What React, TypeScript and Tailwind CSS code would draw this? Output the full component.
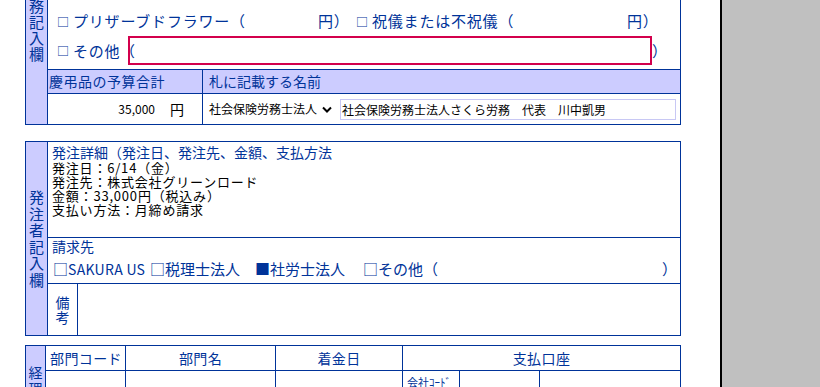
import React from "react";

function VText({ text, className }: { text: string; className: string }) {
  return (
    <div className={className}>
      {text.split("").map((c, i) => (
        <span key={i} className="block text-center">
          {c}
        </span>
      ))}
    </div>
  );
}

function Box({ filled }: { filled?: boolean }) {
  return <span className="inline-block w-[16px] shrink-0 text-[12px] leading-[15px]">{filled ? "■" : "□"}</span>;
}

function Table1() {
  return (
    <div className="flex w-[656px] border border-[#003399] text-[#003399]">
      <VText
        text="事務記入欄"
        className="flex w-[22px] shrink-0 flex-col items-center justify-center border-r border-[#003399] bg-[#ccccff] text-[15px] leading-[16px]"
      />
      <div className="flex flex-1 flex-col">
        <div className="h-[87px]" />
        <div className="flex h-[30px] items-center whitespace-nowrap pl-[9px] text-[15px] leading-[16px] tracking-[0.8px]">
          <span className="flex w-[261px] shrink-0 items-center">
            <Box />
            プリザーブドフラワー（
          </span>
          <span className="w-[38px] shrink-0">円）</span>
          <span className="flex w-[271px] shrink-0 items-center">
            <Box />
            祝儀または不祝儀（
          </span>
          <span>円）</span>
        </div>
        <div className="h-[33px] pl-[9px]">
          <div className="flex h-[29px] items-center whitespace-nowrap text-[15px] leading-[16px] tracking-[0.8px]">
            <span className="flex w-[63px] shrink-0 items-center">
              <Box />
              その他
            </span>
            <span className="w-[16px] shrink-0">（</span>
            <div className="-ml-[8px] h-[29px] w-[524px] shrink-0 border-2 border-[#d3004c]" />
            <span>）</span>
          </div>
        </div>
        <div className="flex h-[25px] border-y border-[#003399] bg-[#ccccff] text-[14px] leading-[23px]">
          <div className="w-[155px] border-r border-[#003399] pl-[1px] tracking-[0.5px]">慶弔品の予算合計</div>
          <div className="flex-1 pl-[6px]">札に記載する名前</div>
        </div>
        <div className="flex h-[30px] text-black">
          <div className="flex w-[155px] items-center justify-end gap-[15px] border-r border-[#003399] pr-[18px] text-[12px]">
            <span>35,000</span>
            <span className="text-[14px]">円</span>
          </div>
          <div className="flex flex-1 items-center whitespace-nowrap pl-[6px] text-[12px]">
            <div className="flex w-[131px] shrink-0 items-center">
              <span>社会保険労務士法人</span>
              <svg className="ml-[5px]" width="10" height="7" viewBox="0 0 10 7">
                <path d="M1 1.5 L5 5.5 L9 1.5" stroke="#000" strokeWidth="2" fill="none" />
              </svg>
            </div>
            <div className="flex h-[21px] w-[336px] shrink-0 items-center border border-[#c8c8f4] pl-[1px] leading-[19px]">
              社会保険労務士法人さくら労務　代表　川中凱男
            </div>
          </div>
        </div>
      </div>
    </div>
  );
}

function Table2() {
  return (
    <div className="mt-[16px] flex w-[656px] border border-[#003399] text-[#003399]">
      <VText
        text="発注者記入欄"
        className="flex w-[22px] shrink-0 flex-col items-center justify-center border-r border-[#003399] bg-[#ccccff] text-[15px] leading-[16.5px]"
      />
      <div className="flex flex-1 flex-col">
        <div className="h-[96px] border-b border-[#003399] pl-[4px] pt-[3px]">
          <div className="text-[14px] leading-[15px]">発注詳細（発注日、発注先、金額、支払方法</div>
          <div className="mt-[1px] text-[13px] leading-[14px] tracking-[0.8px] text-black">
            <div>発注日：6/14（金）</div>
            <div>発注先：株式会社グリーンロード</div>
            <div>金額：33,000円（税込み）</div>
            <div>支払い方法：月締め請求</div>
          </div>
        </div>
        <div className="h-[46px] border-b border-[#003399] pl-[4px]">
          <div className="text-[14px] leading-[16px]">請求先</div>
          <div className="ml-[1px] mt-[6px] flex whitespace-nowrap text-[15px] leading-[17px]">
            <span className="w-[97px] shrink-0">
              □<span className="text-[14px] tracking-[0.3px]">SAKURA US</span>
            </span>
            <span className="w-[105px] shrink-0">□税理士法人</span>
            <span className="w-[108px] shrink-0">■社労士法人</span>
            <span className="w-[299px] shrink-0">□その他（</span>
            <span>）</span>
          </div>
        </div>
        <div className="flex h-[51px]">
          <VText
            text="備考"
            className="flex w-[30px] flex-col items-center justify-center border-r border-[#003399] text-[14px] leading-[15px]"
          />
          <div className="flex-1" />
        </div>
      </div>
    </div>
  );
}

function Table3() {
  return (
    <div className="mt-[9px] flex w-[656px] border border-[#003399] text-[#003399]">
      <VText
        text="経理部記入欄"
        className="flex w-[20px] shrink-0 flex-col items-center border-r border-[#003399] bg-[#ccccff] pt-[18px] text-[14px] leading-[16px]"
      />
      <div className="flex flex-1 flex-col">
        <div className="flex h-[25px] border-b border-[#003399] text-[14px] leading-[24px]">
          <div className="w-[80px] border-r border-[#003399] pl-[4px] tracking-[0.4px]">部門コード</div>
          <div className="w-[150px] border-r border-[#003399] text-center tracking-[0.4px]">部門名</div>
          <div className="w-[127px] border-r border-[#003399] text-center tracking-[0.4px]">着金日</div>
          <div className="flex-1 text-center tracking-[0.4px]">支払口座</div>
        </div>
        <div className="flex h-[40px]">
          <div className="w-[80px] border-r border-[#003399]" />
          <div className="w-[150px] border-r border-[#003399]" />
          <div className="w-[127px] border-r border-[#003399]" />
          <div className="flex flex-1">
            <div className="w-[57px] border-r border-[#003399] pl-[4px] pt-[4px] text-[11px] leading-[14px]">会社ｺｰﾄﾞ</div>
            <div className="w-[80px] border-r border-[#003399]" />
            <div className="flex-1" />
          </div>
        </div>
      </div>
    </div>
  );
}

export default function App() {
  return (
    <div className="flex h-[387px] w-[820px] overflow-hidden bg-[#c0c0c0] font-['Noto_Sans_CJK_JP',sans-serif]">
      <div className="h-full w-[720px] shrink-0 overflow-hidden bg-white">
        <div className="-mt-[82px] pl-[25px]">
          <Table1 />
          <Table2 />
          <Table3 />
        </div>
      </div>
      <div className="h-full w-[2px] shrink-0 bg-black" />
      <div className="h-full flex-1 bg-[#c0c0c0]" />
    </div>
  );
}
